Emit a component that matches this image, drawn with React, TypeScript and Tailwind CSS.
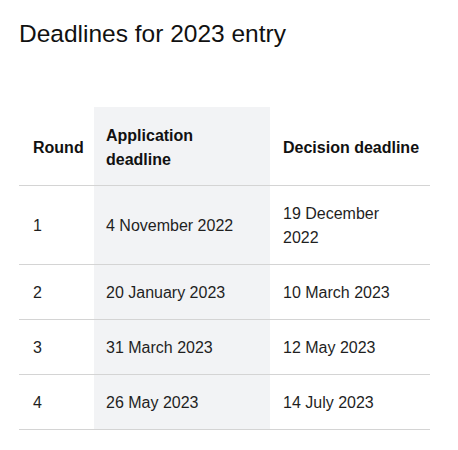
import React from 'react';

const rows = [
  { round: '1', app: '4 November 2022', decision: '19 December 2022' },
  { round: '2', app: '20 January 2023', decision: '10 March 2023' },
  { round: '3', app: '31 March 2023', decision: '12 May 2023' },
  { round: '4', app: '26 May 2023', decision: '14 July 2023' },
];

export default function App() {
  return (
    <div
      className="min-h-[450px] w-[458px] bg-white pl-[19px] pt-[18px] text-[#1f1f1f]"
      style={{ fontFamily: '"Liberation Sans", Arial, sans-serif' }}
    >
      <h2 className="text-[24.5px] leading-8 text-[#111]">Deadlines for 2023 entry</h2>

      <table className="mt-[57px] w-[411px] table-fixed border-collapse text-[16px] leading-6">
        <colgroup>
          <col className="w-[75px]" />
          <col className="w-[176px]" />
          <col className="w-[160px]" />
        </colgroup>
        <thead>
          <tr className="border-b border-[#d4d4d4] text-left font-bold text-[#111]">
            <th className="pl-[14px] pr-2 pt-[17px] pb-[13px] align-middle">Round</th>
            <th className="bg-[#f2f3f5] pl-3 pr-3 pt-[17px] pb-[13px] align-middle">Application deadline</th>
            <th className="pl-[13px] pr-2 pt-[17px] pb-[13px] align-middle">Decision deadline</th>
          </tr>
        </thead>
        <tbody>
          {rows.map((r) => (
            <tr key={r.round} className="border-b border-[#d4d4d4]">
              <td className="pl-[14px] pr-2 pt-4 pb-[14px] align-middle">{r.round}</td>
              <td className="bg-[#f2f3f5] pl-3 pr-3 pt-4 pb-[14px] align-middle">{r.app}</td>
              <td className="pl-[13px] pr-6 pt-4 pb-[14px] align-middle">{r.decision}</td>
            </tr>
          ))}
        </tbody>
      </table>
    </div>
  );
}
